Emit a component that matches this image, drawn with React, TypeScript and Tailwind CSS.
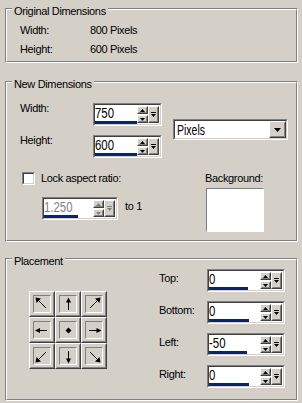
import React from "react";

const SANS = "font-['Liberation_Sans',Arial,sans-serif] tracking-[-0.35px]";
const FIELD = "font-['Liberation_Sans',Arial,sans-serif] tracking-[0px]";

function Raised({ className, children }: { className: string; children?: React.ReactNode }) {
  return (
    <div className={`border border-t-white border-l-white border-b-[#404040] border-r-[#404040] bg-[#d4d0c8] ${className}`}>
      <div className="flex h-full w-full items-center justify-center border border-t-[#d4d0c8] border-l-[#d4d0c8] border-b-[#808080] border-r-[#808080]">
        {children}
      </div>
    </div>
  );
}

function TriUp({ c = "#000" }: { c?: string }) {
  return (
    <svg width="5" height="3" viewBox="0 0 5 3">
      <polygon points="2.5,0 5,3 0,3" fill={c} />
    </svg>
  );
}
function TriDown({ c = "#000" }: { c?: string }) {
  return (
    <svg width="5" height="3" viewBox="0 0 5 3">
      <polygon points="0,0 5,0 2.5,3" fill={c} />
    </svg>
  );
}
function DropIcon({ c = "#000" }: { c?: string }) {
  return (
    <svg width="5" height="6" viewBox="0 0 5 6">
      <rect x="0" y="0" width="5" height="1" fill={c} />
      <polygon points="0,2 5,2 2.5,5" fill={c} />
    </svg>
  );
}

function SpinField({
  value,
  w,
  bar,
  disabled,
}: {
  value: string;
  w: string;
  bar: string;
  disabled?: boolean;
}) {
  const ic = disabled ? "#808080" : "#000";
  return (
    <div className={`${w} h-[23px] shrink-0 border border-t-[#808080] border-l-[#808080] border-b-white border-r-white`}>
      <div className="flex h-full border border-t-[#404040] border-l-[#404040] border-b-[#d4d0c8] border-r-[#d4d0c8] bg-white">
        <div className="flex flex-1 flex-col">
          <div className={`h-[16px] origin-left scale-x-[0.76] text-[15px] leading-[15px] ${FIELD} ${disabled ? "text-[#808080]" : "text-black"}`}>
            {value}
          </div>
          <div className={`h-[3px] ${bar} bg-[#0a246a]`} />
        </div>
        <div className="flex items-center pr-[1px]">
          <div className="flex flex-col gap-[1px]">
            <Raised className="h-[8px] w-[11px]">
              <TriUp c={ic} />
            </Raised>
            <Raised className="h-[8px] w-[11px]">
              <TriDown c={ic} />
            </Raised>
          </div>
          <Raised className="h-[17px] w-[11px]">
            <DropIcon c={ic} />
          </Raised>
        </div>
      </div>
    </div>
  );
}

function Group({
  title,
  className,
  children,
}: {
  title: string;
  className: string;
  children?: React.ReactNode;
}) {
  return (
    <div className={`relative shrink-0 border border-t-[#808080] border-l-[#808080] border-b-white border-r-white ${className}`}>
      <div className="h-full border border-t-white border-l-white border-b-[#808080] border-r-[#808080]">{children}</div>
      <div className="absolute -top-[4px] left-[6px] bg-[#d4d0c8] px-[2px] text-[11px] leading-[13px] text-black">{title}</div>
    </div>
  );
}

type Dir = "nw" | "n" | "ne" | "w" | "c" | "e" | "sw" | "s" | "se";

function ArrowGlyph({ dir }: { dir: Dir }) {
  const line = (x1: number, y1: number, x2: number, y2: number) => (
    <line x1={x1} y1={y1} x2={x2} y2={y2} stroke="#000" strokeWidth="1" />
  );
  let content: React.ReactNode = null;
  switch (dir) {
    case "nw":
      content = (
        <>
          {line(12, 12, 3, 3)}
          <polygon points="1.5,1.5 7,2.5 2.5,7" fill="#000" />
        </>
      );
      break;
    case "n":
      content = (
        <>
          {line(8.5, 14, 8.5, 4)}
          <polygon points="8.5,1.5 6,6.5 11,6.5" fill="#000" />
        </>
      );
      break;
    case "ne":
      content = (
        <>
          {line(4, 12, 13, 3)}
          <polygon points="14.5,1.5 9,2.5 13.5,7" fill="#000" />
        </>
      );
      break;
    case "w":
      content = (
        <>
          {line(13, 8.5, 3, 8.5)}
          <polygon points="1,8.5 6,6 6,11" fill="#000" />
        </>
      );
      break;
    case "c":
      content = <polygon points="8.5,5.5 11.5,8.5 8.5,11.5 5.5,8.5" fill="#000" />;
      break;
    case "e":
      content = (
        <>
          {line(3, 8.5, 13, 8.5)}
          <polygon points="15.5,8.5 10.5,6 10.5,11" fill="#000" />
        </>
      );
      break;
    case "sw":
      content = (
        <>
          {line(12, 4, 3, 13)}
          <polygon points="1.5,14.5 2.5,9 7,13.5" fill="#000" />
        </>
      );
      break;
    case "s":
      content = (
        <>
          {line(8.5, 3, 8.5, 13)}
          <polygon points="8.5,15.5 6,10.5 11,10.5" fill="#000" />
        </>
      );
      break;
    case "se":
      content = (
        <>
          {line(4, 4, 13, 13)}
          <polygon points="14.5,14.5 13.5,9 9,13.5" fill="#000" />
        </>
      );
      break;
  }
  return (
    <svg width="16" height="16" viewBox="0 0 16 16">
      {content}
    </svg>
  );
}

function ArrowBtn({ dir }: { dir: Dir }) {
  return (
    <div className="h-[26px] w-[26px] border border-t-white border-l-white border-b-[#404040] border-r-[#404040] bg-[#d4d0c8]">
      <div className="flex h-full items-center justify-center border border-t-[#d4d0c8] border-l-[#d4d0c8] border-b-[#808080] border-r-[#808080]">
        <div className="flex h-[18px] w-[18px] items-center justify-center border border-t-[#808080] border-l-[#808080] border-b-white border-r-white">
          <ArrowGlyph dir={dir} />
        </div>
      </div>
    </div>
  );
}

function PlacementRow({ label, value, bar }: { label: string; value: string; bar: string }) {
  return (
    <div className="flex items-start">
      <div className="mt-[3px] w-[48px] leading-[13px]">{label}</div>
      <SpinField value={value} w="w-[78px]" bar={bar} />
    </div>
  );
}

export default function App() {
  const dirs: Dir[] = ["nw", "n", "ne", "w", "c", "e", "sw", "s", "se"];
  return (
    <div className={`flex h-[403px] w-[302px] flex-col overflow-hidden bg-[#d4d0c8] pl-[5px] pr-[4px] pt-[8px] text-[11px] leading-[13px] text-black ${SANS}`}>
      {/* Original Dimensions */}
      <Group title="Original Dimensions" className="h-[55px]">
        <div className="flex flex-col gap-[6px] pl-[13px] pt-[14px]">
          <div className="flex">
            <div className="w-[70px]">Width:</div>
            <div>800 Pixels</div>
          </div>
          <div className="flex">
            <div className="w-[70px]">Height:</div>
            <div>600 Pixels</div>
          </div>
        </div>
      </Group>

      {/* New Dimensions */}
      <Group title="New Dimensions" className="mt-[18px] h-[161px]">
        <div className="flex pl-[13px] pt-[19px]">
          <div className="flex flex-col gap-[8px]">
            <div className="flex items-start">
              <div className="w-[73px] leading-[13px]">Width:</div>
              <div className="mt-[1px]">
                <SpinField value="750" w="w-[69px]" bar="w-[42px]" />
              </div>
            </div>
            <div className="flex items-start">
              <div className="w-[73px] leading-[13px]">Height:</div>
              <div className="mt-[1px]">
                <SpinField value="600" w="w-[69px]" bar="w-[42px]" />
              </div>
            </div>
          </div>
          {/* Units select */}
          <div className="ml-[11px] mt-[17px] h-[21px] w-[115px] border border-t-[#808080] border-l-[#808080] border-b-white border-r-white">
            <div className="flex h-full border border-t-[#404040] border-l-[#404040] border-b-[#d4d0c8] border-r-[#d4d0c8] bg-white">
              <div className="flex-1 pl-[2px]">
                <div className={`origin-left scale-x-[0.7] text-[15px] leading-[17px] ${FIELD}`}>Pixels</div>
              </div>
              <Raised className="h-[17px] w-[17px]">
                <svg width="7" height="4" viewBox="0 0 7 4">
                  <polygon points="0,0 7,0 3.5,4" fill="#000" />
                </svg>
              </Raised>
            </div>
          </div>
        </div>

        <div className="mt-[14px] flex pl-[15px]">
          <div className="flex w-[183px] flex-col">
            <div className="flex items-center gap-[6px]">
              <div className="h-[13px] w-[13px] border border-t-[#808080] border-l-[#808080] border-b-white border-r-white">
                <div className="h-full w-full border border-t-[#404040] border-l-[#404040] border-b-[#d4d0c8] border-r-[#d4d0c8] bg-white" />
              </div>
              <div className="leading-[13px]">Lock aspect ratio:</div>
            </div>
            <div className="ml-[20px] mt-[12px] flex items-start gap-[7px]">
              <SpinField value="1.250" w="w-[76px]" bar="w-[34px]" disabled />
              <div className="mt-[3px] leading-[13px]">to 1</div>
            </div>
          </div>
          <div className="flex flex-col">
            <div className="leading-[13px]">Background:</div>
            <div className="ml-[1px] mt-[3px] h-[44px] w-[58px] border border-t-[#808080] border-l-[#808080] border-b-white border-r-white bg-white" />
          </div>
        </div>
      </Group>

      {/* Placement */}
      <Group title="Placement" className="mt-[16px] h-[143px]">
        <div className="flex items-start pl-[22px]">
          <div className="mt-[31px] grid grid-cols-3">
            {dirs.map((d) => (
              <ArrowBtn key={d} dir={d} />
            ))}
          </div>
          <div className="ml-[52px] mt-[9px] flex flex-col gap-[9px]">
            <PlacementRow label="Top:" value="0" bar="w-[39px]" />
            <PlacementRow label="Bottom:" value="0" bar="w-[40px]" />
            <PlacementRow label="Left:" value="-50" bar="w-[38px]" />
            <PlacementRow label="Right:" value="0" bar="w-[40px]" />
          </div>
        </div>
      </Group>
    </div>
  );
}
